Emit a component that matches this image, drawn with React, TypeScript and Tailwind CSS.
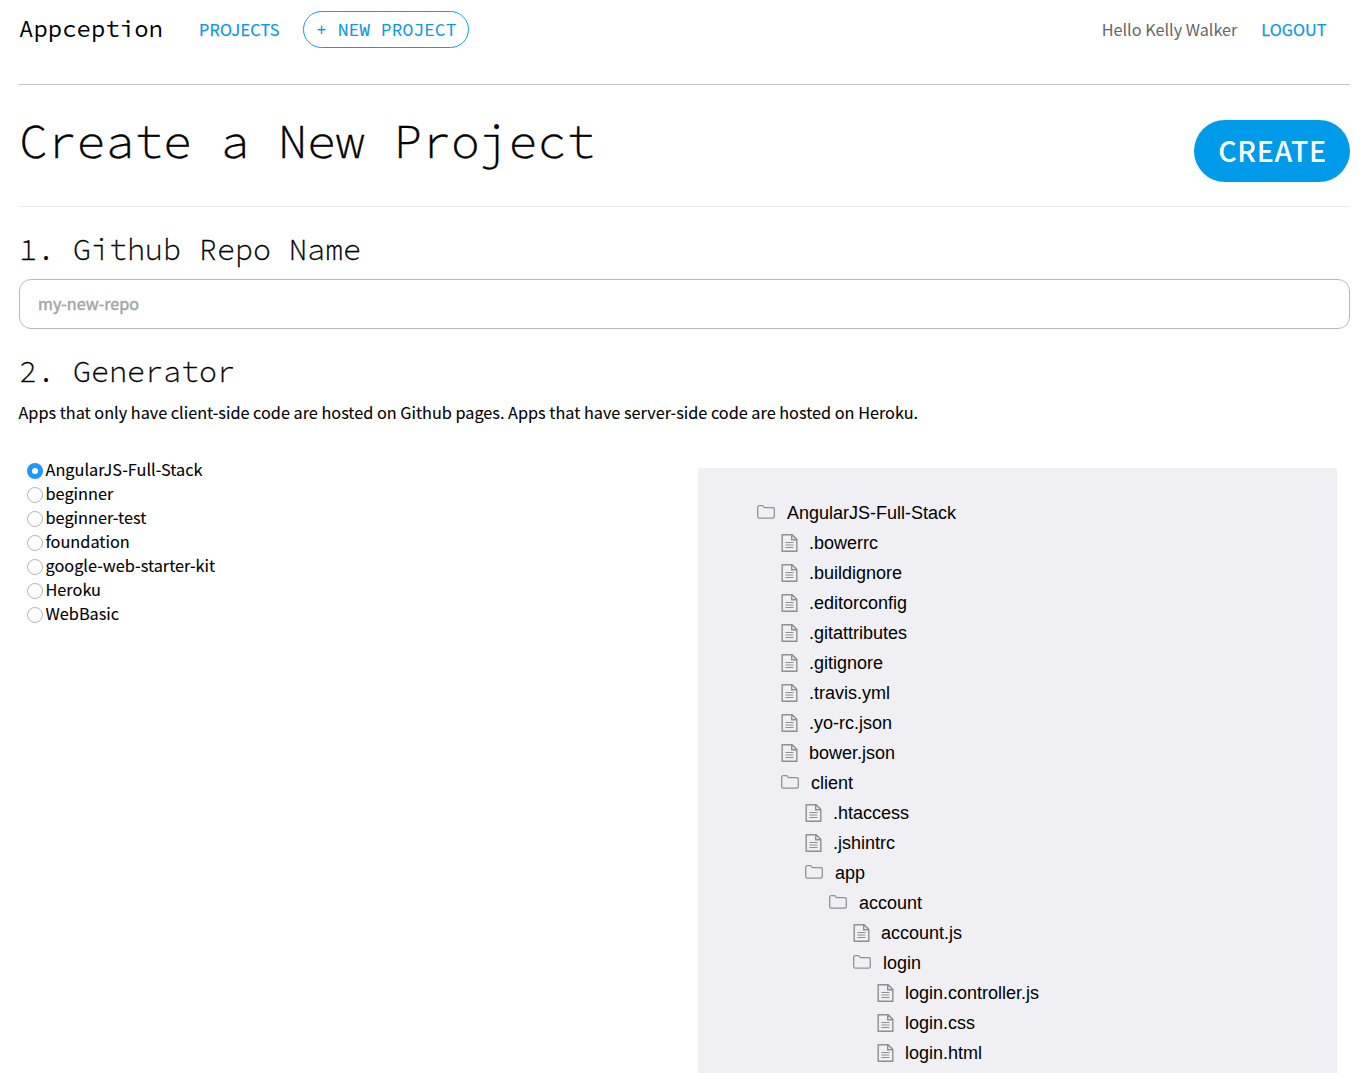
type Node = { name: string; depth: number; folder?: boolean };

const TREE: Node[] = [
  { name: "AngularJS-Full-Stack", depth: 0, folder: true },
  { name: ".bowerrc", depth: 1 },
  { name: ".buildignore", depth: 1 },
  { name: ".editorconfig", depth: 1 },
  { name: ".gitattributes", depth: 1 },
  { name: ".gitignore", depth: 1 },
  { name: ".travis.yml", depth: 1 },
  { name: ".yo-rc.json", depth: 1 },
  { name: "bower.json", depth: 1 },
  { name: "client", depth: 1, folder: true },
  { name: ".htaccess", depth: 2 },
  { name: ".jshintrc", depth: 2 },
  { name: "app", depth: 2, folder: true },
  { name: "account", depth: 3, folder: true },
  { name: "account.js", depth: 4 },
  { name: "login", depth: 4, folder: true },
  { name: "login.controller.js", depth: 5 },
  { name: "login.css", depth: 5 },
  { name: "login.html", depth: 5 },
];

const GENERATORS = [
  "AngularJS-Full-Stack",
  "beginner",
  "beginner-test",
  "foundation",
  "google-web-starter-kit",
  "Heroku",
  "WebBasic",
];

const INDENT = ["pl-0", "pl-6", "pl-12", "pl-18", "pl-24", "pl-30"];

function FolderIcon() {
  return (
    <svg width="18" height="14" viewBox="0 0 18 14" fill="none" stroke="#929295" strokeWidth="1.3" className="mr-3 mb-[2px] shrink-0">
      <path d="M.7 11.6V2.3Q.7.7 2.200.7h3.200q.7 0 1 .6l.5 1q.2.4.8.4h8q1.600 0 1.600 1.600v7.300q0 1.600-1.600 1.600H2.300Q.7 13.200.7 11.600Z" />
    </svg>
  );
}

function FileIcon() {
  return (
    <svg width="17" height="18" viewBox="0 0 17 18" fill="none" stroke="#8f8f92" strokeWidth="1.4" className="mr-[11px] mb-px shrink-0">
      <path d="M1.200.7h9.900l4.700 4.700v11.900H1.200ZM10.700.9v4.900h4.900" />
      <path d="M4.500 8.500h8M4.500 11h8M4.500 13.500h8" strokeWidth="1.2" />
    </svg>
  );
}

export default function App() {
  return (
    <div className="h-[1073px] overflow-hidden bg-white pl-[19px] pr-[22px] font-['Noto_Sans_CJK_SC',sans-serif] text-[16.22px] text-black">
      <header className="flex h-[85px] items-start border-b border-[#c6c6c6]">
        <div className="font-['Source_Code_Pro',monospace] text-2xl leading-[58px]">Appception</div>
        <a className="ml-9 leading-[59px] tracking-[0.25px] text-[#0f97e6] [-webkit-text-stroke:0.25px]">PROJECTS</a>
        <button className="ml-[23px] mt-[11px] h-[37px] w-[166px] rounded-full border border-[#1c9be2] pl-px font-['Source_Code_Pro',monospace] text-lg leading-[35px] text-[#0f97e6] [-webkit-text-stroke:0.1px]">
          + NEW PROJECT
        </button>
        <span className="ml-auto leading-[59px] text-[#666]">Hello Kelly Walker</span>
        <a className="ml-6 mr-[23.5px] leading-[59px] tracking-[0.05px] text-[#0f97e6] [-webkit-text-stroke:0.25px]">LOGOUT</a>
      </header>

      <section className="flex h-[122px] items-start justify-between border-b border-[#ececec]">
        <h1 className="mt-[26px] font-['Source_Code_Pro',monospace] text-5xl font-light leading-[60px] [-webkit-text-stroke:0.4px]">Create a New Project</h1>
        <button className="mt-[35px] h-[62px] w-[156px] rounded-full bg-[#009aeb] pb-[2px] pl-px text-[28.5px] font-medium leading-[60px] tracking-[0.7px] text-white">
          CREATE
        </button>
      </section>

      <h2 className="mt-[23px] font-['Source_Code_Pro',monospace] text-3xl font-light leading-[38px] [-webkit-text-stroke:0.3px]">1. Github Repo Name</h2>
      <input
        className="mt-[11px] block h-[50px] w-full rounded-xl border border-[#b9b9b9] px-[18px] pb-[2px] text-[16.1px] placeholder:text-[#a6a6a6] placeholder:[-webkit-text-stroke:0.5px]"
        placeholder="my-new-repo"
      />

      <h2 className="mt-[23px] font-['Source_Code_Pro',monospace] text-3xl font-light leading-[38px] [-webkit-text-stroke:0.3px]">2. Generator</h2>
      <p className="mt-[10px] -ml-[0.5px] text-[16.24px] leading-6 whitespace-nowrap [-webkit-text-stroke:0.1px]">
        Apps that only have client-side code are hosted on Github pages. Apps that have server-side code are hosted on Heroku.
      </p>

      <main className="mt-[33px] flex items-start justify-between">
        <ul className="pl-2">
          {GENERATORS.map((name, i) => (
            <li key={name} className="h-6">
              <label className="flex items-center text-[16.3px] leading-6 [-webkit-text-stroke:0.1px]">
                {i === 0 ? (
                  <span className="mt-[3px] mr-[2.5px] flex size-4 items-center justify-center rounded-full bg-[#2196fb]">
                    <span className="size-[6px] rounded-full bg-white" />
                  </span>
                ) : (
                  <span className="mt-[3px] mr-[2.5px] size-4 rounded-full border border-[#b4b4b4] bg-white" />
                )}
                {name}
              </label>
            </li>
          ))}
        </ul>

        <div className="mt-[11px] mr-[13px] h-[620px] w-[639px] bg-[#efeff4] pt-[30px] pl-[59px]">
          {TREE.map((n) => (
            <div
              key={n.name}
              className={`flex h-[30px] items-center font-['Liberation_Sans',sans-serif] text-lg leading-[30px] ${INDENT[n.depth]}`}
            >
              {n.folder ? <FolderIcon /> : <FileIcon />}
              {n.name}
            </div>
          ))}
        </div>
      </main>
    </div>
  );
}
